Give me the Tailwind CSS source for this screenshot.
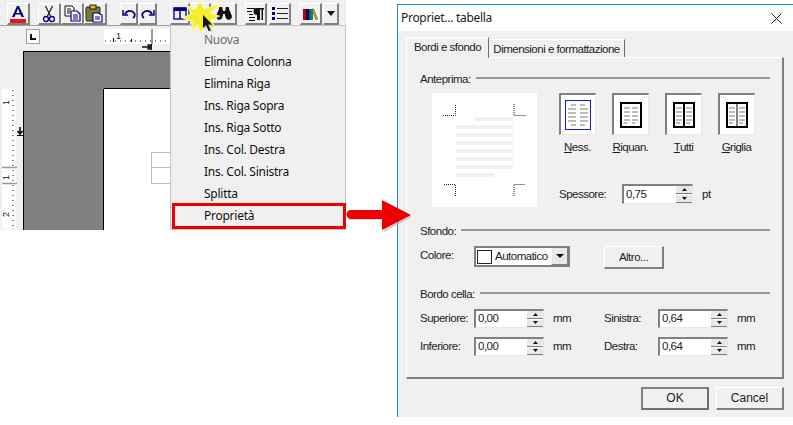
<!doctype html>
<html><head><meta charset="utf-8">
<script src="https://cdn.jsdelivr.net/npm/@tailwindcss/browser@4"></script>
</head>
<body class="bg-white overflow-hidden font-['Liberation_Sans',sans-serif]">
<div class="relative w-[793px] h-[425px] overflow-hidden bg-white">

<!-- Left application window -->
<div class="absolute left-0 top-0 w-[346px] h-[230px] bg-[#f0f0f0] flex flex-col">
  <div class="h-[26px] border-b border-[#a0a0a0] flex items-start pt-[3px] pl-[7px]">
    <div class="w-[23px] h-[22px] bg-[#f0f0f0] border-t border-l border-white border-r-2 border-b-2 border-r-[#808080] border-b-[#808080] flex items-center justify-center">
      <svg width="18" height="18" viewBox="0 0 18 18"><path d="M3 12 8 1h2l5 11h-2.500l-1-2.500h-5L5.500 12zM7.300 8h3.400L9 3.500z" fill="#000080"/><rect x="1" y="14" width="16" height="4" fill="#e8141c"/></svg>
    </div>
    <div class="ml-[8px] flex">
      <div class="w-[23px] h-[22px] border-t border-l border-white border-r-2 border-b-2 border-r-[#808080] border-b-[#808080] flex items-center justify-center">
        <svg width="12" height="18" viewBox="0 0 12 18" fill="none" stroke="#000080" stroke-width="1.300"><path d="M2.500 1 7.500 11M9.500 1 4.500 11" stroke="#222"/><circle cx="3" cy="14" r="2.500"/><circle cx="9" cy="14" r="2.500"/></svg>
      </div>
      <div class="w-[23px] h-[22px] border-t border-l border-white border-r-2 border-b-2 border-r-[#808080] border-b-[#808080] flex items-center justify-center">
        <svg width="17" height="17" viewBox="0 0 17 17"><path d="M1 1h7l2 2v8H1z" fill="#fff" stroke="#111"/><path d="M7 6h6l3 3v7H7z" fill="#fff" stroke="#000080" stroke-width="1.200"/><path d="M3 4h4M3 6h3M3 8h3" stroke="#111"/><path d="M9 10h5M9 12h5M9 14h5" stroke="#000080"/></svg>
      </div>
      <div class="w-[23px] h-[22px] border-t border-l border-white border-r-2 border-b-2 border-r-[#808080] border-b-[#808080] flex items-center justify-center">
        <svg width="20" height="19" viewBox="0 0 20 19"><rect x="1" y="3" width="14" height="14" rx="1" fill="#7a7a3c" stroke="#222"/><rect x="5" y="1" width="6" height="4" fill="#d8c020" stroke="#222"/><path d="M8 9h5l4 2v7H8z" fill="#fff" stroke="#000080" stroke-width="1.200"/><path d="M10 13h5M10 15h5" stroke="#000080"/></svg>
      </div>
    </div>
    <div class="ml-[13px] flex gap-[1px]">
      <div class="w-[18px] h-[22px] border-t border-l border-white border-r-2 border-b-2 border-r-[#808080] border-b-[#808080] flex items-center justify-center">
        <svg width="14" height="10" viewBox="0 0 14 10" fill="none" stroke="#000080" stroke-width="1.800"><path d="M3 5C5 1 10 1 12.500 4.500C13 6 12.500 8 11 9"/><path d="M1 1v5h5" stroke-width="1.500"/></svg>
      </div>
      <div class="w-[18px] h-[22px] border-t border-l border-white border-r-2 border-b-2 border-r-[#808080] border-b-[#808080] flex items-center justify-center">
        <svg width="14" height="10" viewBox="0 0 14 10" fill="none" stroke="#000080" stroke-width="1.800"><path d="M11 5C9 1 4 1 1.500 4.500C1 6 1.500 8 3 9"/><path d="M13 1v5H8" stroke-width="1.500"/></svg>
      </div>
    </div>
    <div class="ml-[13px] flex gap-[1px]">
      <div class="w-[20px] h-[22px] border-t border-l border-white border-r-2 border-b-2 border-r-[#808080] border-b-[#808080] flex items-center justify-center">
        <svg width="14" height="13" viewBox="0 0 14 13" fill="none" stroke="#000080"><rect x="1" y="1" width="12" height="11" stroke-width="1.300"/><rect x="1" y="1" width="12" height="2.500" fill="#000080"/><path d="M7 1v11" stroke-width="1.500"/></svg>
      </div>
      <div class="w-[20px] h-[22px] border-t border-l border-white border-r-2 border-b-2 border-r-[#808080] border-b-[#808080]"></div>
      <div class="w-[25px] h-[22px] border-t border-l border-white border-r-2 border-b-2 border-r-[#808080] border-b-[#808080] flex items-center justify-center">
        <svg width="16" height="14" viewBox="0 0 16 14" fill="#111"><rect x="3" y="0" width="3.500" height="5" rx="1"/><rect x="9.500" y="0" width="3.500" height="5" rx="1"/><rect x="6" y="4" width="4" height="3"/><path d="M2.500 3h4.500v6H6.500a3.200 3.200 0 1 1-6-1zM13.500 3H9v6h.5a3.200 3.200 0 1 0 6-1z"/></svg>
      </div>
    </div>
    <div class="ml-[8px] flex gap-[2px]">
      <div class="w-[22px] h-[22px] border-t border-l border-white border-r-2 border-b-2 border-r-[#808080] border-b-[#808080] flex items-center justify-center">
        <svg width="18" height="14" viewBox="0 0 18 14"><path d="M0 1.500h8M0 4.500h5M2 7.500h4M2 10.500h6M2 13.500h6" stroke="#111"/><path d="M10 13V8a3.500 3.500 0 0 1 0-7h7v1.500h-1V13h-1.500V2.500h-1.500V13z" fill="#111"/></svg>
      </div>
      <div class="w-[22px] h-[22px] border-t border-l border-white border-r-2 border-b-2 border-r-[#808080] border-b-[#808080] flex items-center justify-center">
        <svg width="16" height="13" viewBox="0 0 16 13"><rect x="0" y="0" width="3" height="3" fill="#000080"/><rect x="0" y="5" width="3" height="3" fill="#000080"/><rect x="0" y="10" width="3" height="3" fill="#000080"/><path d="M5 1.500h11M5 6.500h11M5 11.500h11" stroke="#222" stroke-width="1.200"/></svg>
      </div>
    </div>
    <div class="ml-[9px] flex gap-[1px]">
      <div class="w-[22px] h-[22px] border-t border-l border-white border-r-2 border-b-2 border-r-[#808080] border-b-[#808080] flex items-center justify-center">
        <svg width="15" height="12" viewBox="0 0 15 12"><rect x="0" y="1" width="3" height="11" fill="#b00020"/><rect x="3" y="1" width="3" height="11" fill="#111"/><rect x="6" y="1" width="2" height="11" fill="#1050c0"/><path d="M9 1 10.500 1 14.500 11 13 12z" fill="#e0c000" stroke="#222" stroke-width=".5"/><rect x="8" y="1" width="2" height="11" fill="#109040"/></svg>
      </div>
      <div class="w-[16px] h-[22px] border-t border-l border-white border-r-2 border-b-2 border-r-[#808080] border-b-[#808080] flex items-center justify-center">
        <svg width="8" height="5" viewBox="0 0 8 5"><path d="M0 0h8L4 5z" fill="#111"/></svg>
      </div>
    </div>
  </div>

  <div class="h-[25px] relative flex items-start pt-[3px]">
    <div class="ml-[26px] w-[14px] h-[15px] bg-white border border-[#a0a0a0] flex items-center justify-center">
      <svg width="6" height="6" viewBox="0 0 6 6"><path d="M0 0h2v4h4v2H0z" fill="#111"/></svg>
    </div>
    <svg class="ml-[64px]" width="66" height="22" viewBox="0 0 66 22">
      <rect width="66" height="15" fill="#fff"/>
      <line x1="1" y1="12" x2="66" y2="12" stroke="#111" stroke-width="1" stroke-dasharray="1 4"/>
      <path d="M9.500 9v4M27.500 10v3" stroke="#111"/>
      <text x="12" y="10" font-size="9" font-family="Liberation Sans" fill="#111">1</text>
      <rect x="47" y="0" width="2" height="15" fill="#999"/>
      <path d="M38 18h8M46 15v6M43.500 15.500 46 18l-2.500 2.500" stroke="#111" stroke-width="1.500" fill="none"/>
      <rect x="47" y="15" width="1" height="6" fill="#111"/>
    </svg>
  </div>

  <div class="flex-1 flex min-h-0">
    <div class="w-[23px] pt-[38px] relative">
      <svg width="23" height="140" viewBox="0 0 23 140">
        <rect x="2" y="0" width="14" height="140" fill="#fff"/>
        <line x1="13" y1="1" x2="13" y2="140" stroke="#111" stroke-dasharray="1 4"/>
        <text x="9" y="16" font-size="9" font-family="Liberation Sans" fill="#111" transform="rotate(-90 9 16)">1</text>
        <text x="9" y="91" font-size="9" font-family="Liberation Sans" fill="#111" transform="rotate(-90 9 91)">1</text>
        <text x="9" y="128" font-size="9" font-family="Liberation Sans" fill="#111" transform="rotate(-90 9 128)">2</text>
        <path d="M20 38v7M17.500 42 20 45l2.500-3" stroke="#111" stroke-width="1.600" fill="none"/>
        <rect x="17" y="46" width="6" height="1" fill="#111"/>
        <path d="M2 78.500h15M2 94.500h15" stroke="#999" stroke-width="1.500"/>
      </svg>
    </div>
    <div class="w-[81px] bg-[#808080] border-t border-l border-black"></div>
    <div class="flex-1 flex flex-col min-w-0">
      <div class="h-[38px] bg-[#808080] border-t border-black border-b"></div>
      <div class="flex-1 bg-white"></div>
    </div>
  </div>
</div>
<div class="absolute left-[103px] top-[89px] w-px h-[141px] bg-black"></div>
<div class="absolute left-[151px] top-[152px] w-[20px] h-[32px] border border-[#bdbdbd] flex flex-col">
  <div class="h-[15px] border-b border-[#bdbdbd]"></div>
</div>

<!-- context menu -->
<div class="absolute left-[170px] top-[25px] w-[176px] h-[205px] bg-[#f0f0f0] border border-[#c4c4c4] pl-[33px] pt-[3px] text-[12px] tracking-[-0.25px] text-[#111] font-['Noto_Sans',sans-serif] flex flex-col">
  <div class="h-[22px] leading-[22px] text-[#6d6d6d]">Nuova</div>
  <div class="h-[22px] leading-[22px]">Elimina Colonna</div>
  <div class="h-[22px] leading-[22px]">Elimina Riga</div>
  <div class="h-[22px] leading-[22px]">Ins. Riga Sopra</div>
  <div class="h-[22px] leading-[22px]">Ins. Riga Sotto</div>
  <div class="h-[22px] leading-[22px]">Ins. Col. Destra</div>
  <div class="h-[22px] leading-[22px]">Ins. Col. Sinistra</div>
  <div class="h-[22px] leading-[22px]">Splitta</div>
  <div class="h-[22px] leading-[22px]">Proprietà</div>
</div>
<div class="absolute left-[172px] top-[203px] w-[174px] h-[26px] border-[3px] border-[#ee0000]"></div>

<!-- star and cursor -->
<svg class="absolute left-[183px] top-0" width="42" height="36" viewBox="0 0 42 36">
  <path d="M17 2 21 9 38 4 27 13 36 16 28 20 32 28 22 25 18 33 14 25 9 31 10 22 0 18 9 14 4 6 12 9Z" fill="#f5ee2a" stroke="#fbf7a0" stroke-width="1.200"/>
  <path d="M20 15v13l3-3 2.500 6 2-1-2.500-5.500h4z" fill="#777" opacity=".5" transform="translate(1.500 1)"/>
  <path d="M20 15v13l3-3 2.500 6 2-1-2.500-5.500h4z" fill="#16161c"/>
</svg>

<!-- Dialog window -->
<div class="absolute left-[397px] top-[4px] w-[396px] h-[413px] bg-[#f0f0f0] border-l border-t border-[#1a8ae0] flex flex-col text-[11.500px] tracking-[-0.5px] text-[#1c1c1c]">
  <div class="h-[26px] shrink-0 bg-white flex items-center justify-between pl-[3px] pr-[11px] text-[12px] tracking-[-0.3px] font-['Noto_Sans',sans-serif]">
    <span>Propriet... tabella</span>
    <svg width="11" height="11" viewBox="0 0 11 11" stroke="#222" fill="none"><path d="M.5.5l10 10M10.500.5l-10 10"/></svg>
  </div>
  <div class="pl-[8px] pt-[6px] flex items-end h-[26px] shrink-0 relative z-10">
    <div class="w-[83px] h-[21px] bg-[#f0f0f0] border-t border-l border-white border-r border-r-[#707070] text-center leading-[19px] -mb-px">Bordi e sfondo</div>
    <div class="w-[136px] h-[18px] bg-[#f0f0f0] border-t border-white border-r border-r-[#707070] text-center leading-[18px] whitespace-nowrap">Dimensioni e formattazione</div>
  </div>
  <div class="ml-[8px] w-[378px] h-[322px] shrink-0 border-t border-l border-white border-r-2 border-b-2 border-r-[#808080] border-b-[#808080] pl-[13px] pr-[12px] pt-[15px] flex flex-col">

    <div class="flex items-center gap-[5px] h-[14px]">
      <span>Anteprima:</span><div class="flex-1 h-[2px] bg-[#999] -mt-[5px]"></div>
    </div>
    <div class="flex mt-[6px]">
      <div class="ml-[12px] w-[105px] h-[114px] bg-white relative">
        <svg width="105" height="114" viewBox="0 0 105 114">
          <g fill="none" stroke="#222" stroke-dasharray="1 1"><path d="M11 22.500h12.500V11M82 11v11.500h12M12 91.500h11.500V103M82 103V91.500h11"/></g>
          <g fill="#f0f0f0"><rect x="43" y="24" width="38" height="4"/><rect x="24" y="32" width="57" height="4"/><rect x="24" y="40" width="57" height="4"/><rect x="24" y="48" width="57" height="4"/><rect x="24" y="56" width="57" height="4"/><rect x="24" y="64" width="57" height="4"/><rect x="24" y="72" width="57" height="4"/><rect x="24" y="80" width="38" height="4"/></g>
        </svg>
      </div>
      <div class="ml-[22px] flex flex-col">
        <div class="flex gap-[16px]">
          <div class="w-[37px] flex flex-col items-center">
            <div class="w-[37px] h-[42px] bg-white border-t-2 border-l-2 border-[#808080] border-r border-b border-r-[#e8e8e8] border-b-[#e8e8e8] flex items-center justify-center">
              <svg width="26" height="30" viewBox="0 0 26 30"><rect x=".5" y=".5" width="25" height="29" fill="none" stroke="#1414e0"/><path d="M6 5h5M15 5h5M3 9h8M15 9h8M3 13h8M15 13h8M3 17h8M15 17h8M3 21h8M15 21h8M6 25h5M15 25h5" stroke="#bdbdbd" stroke-width="2"/></svg>
            </div>
            <span class="mt-[4px]"><u>N</u>ess.</span>
          </div>
          <div class="w-[37px] flex flex-col items-center">
            <div class="w-[37px] h-[42px] bg-white border-t-2 border-l-2 border-[#808080] border-r border-b border-r-[#e8e8e8] border-b-[#e8e8e8] flex items-center justify-center">
              <svg width="22" height="26" viewBox="0 0 22 26"><rect x="1" y="1" width="20" height="24" fill="none" stroke="#000" stroke-width="2"/><path d="M4 6h6M12 6h6M4 10h6M12 10h6M4 14h6M12 14h6M4 18h6M12 18h6M4 21h3M12 21h3" stroke="#bdbdbd" stroke-width="2"/></svg>
            </div>
            <span class="mt-[4px] whitespace-nowrap"><u>R</u>iquan.</span>
          </div>
          <div class="w-[37px] flex flex-col items-center">
            <div class="w-[37px] h-[42px] bg-white border-t-2 border-l-2 border-[#808080] border-r border-b border-r-[#e8e8e8] border-b-[#e8e8e8] flex items-center justify-center">
              <svg width="22" height="26" viewBox="0 0 22 26"><rect x="1" y="1" width="20" height="24" fill="none" stroke="#000" stroke-width="2"/><path d="M11 1v24" stroke="#000" stroke-width="2"/><path d="M3 6h6M13 6h6M3 10h6M13 10h6M3 14h6M13 14h6M3 18h6M13 18h6M3 21h4M13 21h4" stroke="#bdbdbd" stroke-width="2"/></svg>
            </div>
            <span class="mt-[4px]"><u>T</u>utti</span>
          </div>
          <div class="w-[37px] flex flex-col items-center">
            <div class="w-[37px] h-[42px] bg-white border-t-2 border-l-2 border-[#808080] border-r border-b border-r-[#e8e8e8] border-b-[#e8e8e8] flex items-center justify-center">
              <svg width="22" height="26" viewBox="0 0 22 26"><rect x="1" y="1" width="20" height="24" fill="none" stroke="#000" stroke-width="2"/><path d="M11 1v24" stroke="#000" stroke-width="1"/><path d="M3 6h6M13 6h6M3 10h6M13 10h6M3 14h6M13 14h6M3 18h6M13 18h6M3 21h4M13 21h4" stroke="#bdbdbd" stroke-width="2"/></svg>
            </div>
            <span class="mt-[4px]"><u>G</u>riglia</span>
          </div>
        </div>
        <div class="flex items-center mt-[28px]">
          <span class="w-[63px]">Spessore:</span>
          <div class="w-[71px] h-[20px] bg-white border-t-2 border-l-2 border-[#808080] border-r border-b border-r-[#e8e8e8] border-b-[#e8e8e8] flex items-center justify-between pl-[2px]">
            <span>0,75</span>
            <div class="w-[16px] h-full flex flex-col gap-px bg-white">
              <div class="flex-1 bg-[#e8e8e8] border-b border-[#808080] flex items-center justify-center"><svg width="5" height="3" viewBox="0 0 5 3"><path d="M0 3h5L2.500 0z" fill="#111"/></svg></div>
              <div class="flex-1 bg-[#e8e8e8] border-b border-[#808080] flex items-center justify-center"><svg width="5" height="3" viewBox="0 0 5 3"><path d="M0 0h5L2.500 3z" fill="#111"/></svg></div>
            </div>
          </div>
          <span class="ml-[9px]">pt</span>
        </div>
      </div>
    </div>

    <div class="flex items-center gap-[5px] h-[14px] mt-[18px]">
      <span>Sfondo:</span><div class="flex-1 h-[2px] bg-[#999] -mt-[5px]"></div>
    </div>
    <div class="flex items-start mt-[7px]">
      <span class="w-[54px] mt-[1px]">Colore:</span>
      <div class="w-[96px] h-[21px] bg-white border-t-2 border-l-2 border-[#808080] border-r-2 border-b-2 flex items-center pl-[1px]">
        <div class="w-[15px] h-[14px] border border-[#222] bg-white"></div>
        <span class="ml-[3px] flex-1">Automatico</span>
        <div class="w-[17px] h-full bg-[#e8e8e8] border-l border-white border-r border-b border-r-[#808080] border-b-[#808080] flex items-center justify-center"><svg width="8" height="4" viewBox="0 0 8 4"><path d="M0 0h8L4 4z" fill="#111"/></svg></div>
      </div>
      <div class="ml-[34px] w-[60px] h-[23px] border-t border-l border-white border-r-2 border-b-2 border-r-[#808080] border-b-[#808080] text-center leading-[20px]">Altro...</div>
    </div>

    <div class="flex items-center gap-[5px] h-[14px] mt-[19px]">
      <span>Bordo cella:</span><div class="flex-1 h-[2px] bg-[#999] -mt-[5px]"></div>
    </div>
    <div class="mt-[7px] grid grid-cols-[54px_70px_60px_54px_70px_auto] gap-y-[9px] items-center">
      <span>Superiore:</span>
      <div class="h-[19px] bg-white border-t-2 border-l-2 border-[#808080] border-r border-b border-r-[#e8e8e8] border-b-[#e8e8e8] flex items-center justify-between pl-[2px]">
        <span>0,00</span>
        <div class="w-[16px] h-full flex flex-col gap-px bg-white">
          <div class="flex-1 bg-[#e8e8e8] border-b border-[#808080] flex items-center justify-center"><svg width="5" height="3" viewBox="0 0 5 3"><path d="M0 3h5L2.500 0z" fill="#111"/></svg></div>
          <div class="flex-1 bg-[#e8e8e8] border-b border-[#808080] flex items-center justify-center"><svg width="5" height="3" viewBox="0 0 5 3"><path d="M0 0h5L2.500 3z" fill="#111"/></svg></div>
        </div>
      </div>
      <span class="pl-[9px]">mm</span>
      <span>Sinistra:</span>
      <div class="h-[19px] bg-white border-t-2 border-l-2 border-[#808080] border-r border-b border-r-[#e8e8e8] border-b-[#e8e8e8] flex items-center justify-between pl-[2px]">
        <span>0,64</span>
        <div class="w-[16px] h-full flex flex-col gap-px bg-white">
          <div class="flex-1 bg-[#e8e8e8] border-b border-[#808080] flex items-center justify-center"><svg width="5" height="3" viewBox="0 0 5 3"><path d="M0 3h5L2.500 0z" fill="#111"/></svg></div>
          <div class="flex-1 bg-[#e8e8e8] border-b border-[#808080] flex items-center justify-center"><svg width="5" height="3" viewBox="0 0 5 3"><path d="M0 0h5L2.500 3z" fill="#111"/></svg></div>
        </div>
      </div>
      <span class="pl-[9px]">mm</span>
      <span>Inferiore:</span>
      <div class="h-[19px] bg-white border-t-2 border-l-2 border-[#808080] border-r border-b border-r-[#e8e8e8] border-b-[#e8e8e8] flex items-center justify-between pl-[2px]">
        <span>0,00</span>
        <div class="w-[16px] h-full flex flex-col gap-px bg-white">
          <div class="flex-1 bg-[#e8e8e8] border-b border-[#808080] flex items-center justify-center"><svg width="5" height="3" viewBox="0 0 5 3"><path d="M0 3h5L2.500 0z" fill="#111"/></svg></div>
          <div class="flex-1 bg-[#e8e8e8] border-b border-[#808080] flex items-center justify-center"><svg width="5" height="3" viewBox="0 0 5 3"><path d="M0 0h5L2.500 3z" fill="#111"/></svg></div>
        </div>
      </div>
      <span class="pl-[9px]">mm</span>
      <span>Destra:</span>
      <div class="h-[19px] bg-white border-t-2 border-l-2 border-[#808080] border-r border-b border-r-[#e8e8e8] border-b-[#e8e8e8] flex items-center justify-between pl-[2px]">
        <span>0,64</span>
        <div class="w-[16px] h-full flex flex-col gap-px bg-white">
          <div class="flex-1 bg-[#e8e8e8] border-b border-[#808080] flex items-center justify-center"><svg width="5" height="3" viewBox="0 0 5 3"><path d="M0 3h5L2.500 0z" fill="#111"/></svg></div>
          <div class="flex-1 bg-[#e8e8e8] border-b border-[#808080] flex items-center justify-center"><svg width="5" height="3" viewBox="0 0 5 3"><path d="M0 0h5L2.500 3z" fill="#111"/></svg></div>
        </div>
      </div>
      <span class="pl-[9px]">mm</span>
    </div>
  </div>
  <div class="flex ml-[243px] gap-[7px] mt-[8px] text-[12px] tracking-normal">
    <div class="w-[68px] h-[23px] border-t-2 border-l-2 border-[#808080] border-r-2 border-b-2 border-r-[#707070] border-b-[#707070] text-center leading-[19px]">OK</div>
    <div class="w-[68px] h-[23px] border-t border-l border-white border-r-2 border-b-2 border-r-[#808080] border-b-[#808080] text-center leading-[20px]">Cancel</div>
  </div>
</div>

<!-- red arrow, over the dialog edge -->
<svg class="absolute left-[346px] top-[198px]" width="70" height="36" viewBox="0 0 70 36">
  <path d="M5 13h32V3l28 15-28 15V21H5a4 4 0 0 1 0-8z" fill="#999" opacity=".45" transform="translate(1 1)"/>
  <path d="M5 12h31V2l29 15-29 15V21H5a4.500 4.500 0 0 1 0-9z" fill="#ee0000"/>
</svg>
</div>
</body></html>
